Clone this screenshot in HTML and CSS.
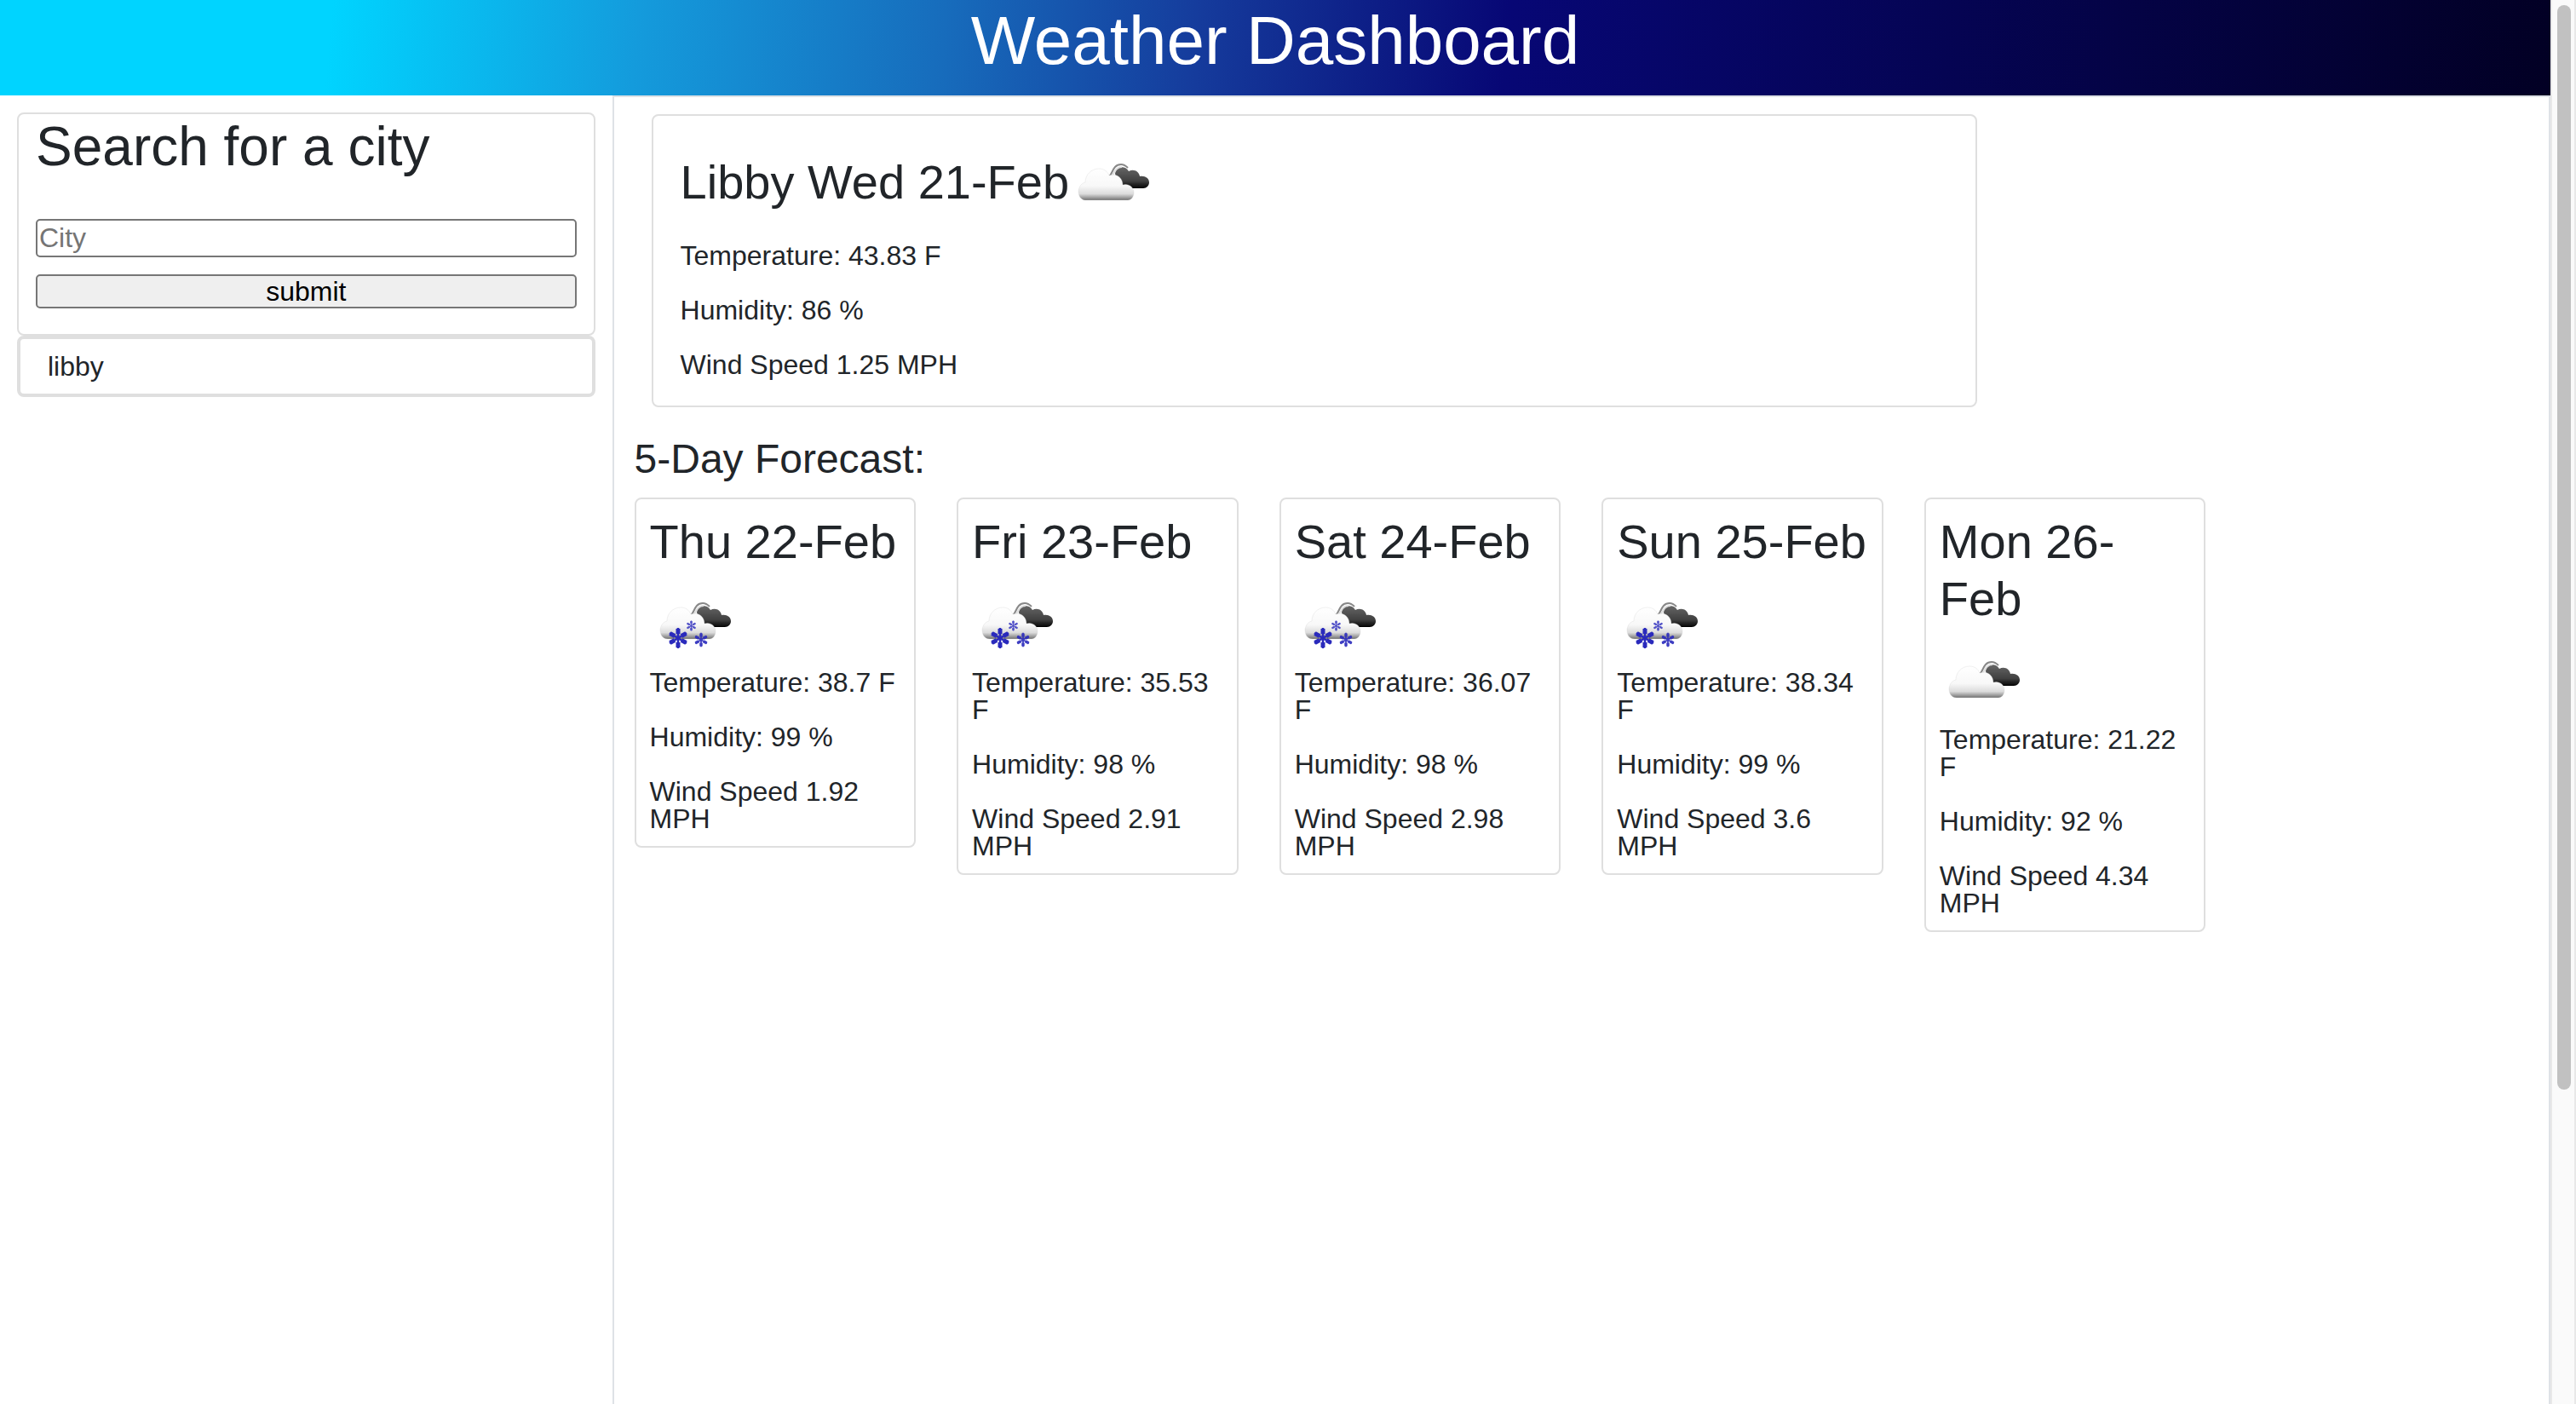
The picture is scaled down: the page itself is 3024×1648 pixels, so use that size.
FILE: index.html
```html
<!DOCTYPE html>
<html lang="en">
<head>
<meta charset="utf-8">
<title>Weather Dashboard</title>
<link rel="stylesheet" href="styles.css">
</head>
<body>
<svg class="sprite" aria-hidden="true">
  <defs>
    <linearGradient id="light" x1="0" y1="0" x2="0" y2="1">
      <stop offset="0" stop-color="#ffffff"/>
      <stop offset="0.55" stop-color="#f8f8f8"/>
      <stop offset="0.8" stop-color="#dcdcdc"/>
      <stop offset="0.9" stop-color="#a8a8a8"/>
      <stop offset="1" stop-color="#707070"/>
    </linearGradient>
    <linearGradient id="dark" x1="0" y1="0" x2="0" y2="1">
      <stop offset="0" stop-color="#666666"/>
      <stop offset="0.65" stop-color="#404040"/>
      <stop offset="1" stop-color="#000000"/>
    </linearGradient>
    <filter id="soft" x="-10%" y="-10%" width="120%" height="120%"><feGaussianBlur stdDeviation="0.7"/></filter>
    <symbol id="clouds" viewBox="1 0 100 100">
      <g filter="url(#soft)">
        <path d="M55 36C56 28 66 25 71 33C77 30 83 33 84 39C90 38 95 41 95 46C95 50 92 53 88 53H66L58 44Z" fill="url(#dark)"/>
        <path d="M48 39C52 37 52 25 62 25C66 25 68 27 70 29" fill="none" stroke="#888" stroke-width="2"/>
        <path d="M51 39C54 36 55 28 63 28" fill="none" stroke="#ddd" stroke-width="2"/>
        <path d="M21 67C14 67 12 61 12 56C13 50 16 47 20 46C20 37 27 30 36 30C42 30 46 33 48 38C56 35 64 40 64 49C70 47 77 51 77 58C77 63 74 67 70 67Z" fill="url(#light)" stroke="#ccc" stroke-opacity="0.3" stroke-width="1"/>
      </g>
    </symbol>
    <symbol id="flake" viewBox="-13 -13 26 26">
      <g fill="none" stroke="#2a2abc">
        <path d="M0-12V12M-10-6L10 6M-10 6L10-6" stroke-width="2.6"/>
        <path d="M0-11V-5M0 11V5M-9.5-5.5L-4-2.5M9.5 5.5L4 2.5M-9.5 5.5L-4 2.5M9.5-5.5L4-2.5" stroke-width="5"/>
      </g>
    </symbol>
    <symbol id="snow" viewBox="0 0 100 100">
      <use href="#clouds" x="1" y="-2" width="100" height="100"/>
      <g filter="url(#soft)">
        <use href="#flake" x="20" y="51" width="26" height="26"/>
        <use href="#flake" x="42" y="43" width="13" height="13" opacity="0.8"/>
        <use href="#flake" x="51" y="57" width="18" height="18" opacity="0.9"/>
      </g>
    </symbol>
  </defs>
</svg>
<div class="page">
  <div class="content">
    <header class="header"><h1>Weather Dashboard</h1></header>
    <div class="columns">
      <aside class="sidebar">
        <form class="card search">
          <h2><label for="city">Search for a city</label></h2>
          <input id="city" type="text" placeholder="City">
          <button type="button">submit</button>
        </form>
        <ul class="history"><li>libby</li></ul>
      </aside>
      <main class="main">
        <section class="card current">
          <h3>Libby Wed 21-Feb<svg class="icon"><use href="#clouds"/></svg></h3>
          <p>Temperature: 43.83 F</p>
          <p>Humidity: 86 %</p>
          <p>Wind Speed 1.25 MPH</p>
        </section>
        <h4>5-Day Forecast:</h4>
        <div class="forecast">
          <article class="card day">
            <h3>Thu 22-Feb</h3>
            <svg class="icon"><use href="#snow"/></svg>
            <p>Temperature: 38.7 F</p>
            <p>Humidity: 99 %</p>
            <p>Wind Speed 1.92 MPH</p>
          </article>
          <article class="card day">
            <h3>Fri 23-Feb</h3>
            <svg class="icon"><use href="#snow"/></svg>
            <p>Temperature: 35.53 F</p>
            <p>Humidity: 98 %</p>
            <p>Wind Speed 2.91 MPH</p>
          </article>
          <article class="card day">
            <h3>Sat 24-Feb</h3>
            <svg class="icon"><use href="#snow"/></svg>
            <p>Temperature: 36.07 F</p>
            <p>Humidity: 98 %</p>
            <p>Wind Speed 2.98 MPH</p>
          </article>
          <article class="card day">
            <h3>Sun 25-Feb</h3>
            <svg class="icon"><use href="#snow"/></svg>
            <p>Temperature: 38.34 F</p>
            <p>Humidity: 99 %</p>
            <p>Wind Speed 3.6 MPH</p>
          </article>
          <article class="card day">
            <h3>Mon 26-Feb</h3>
            <svg class="icon"><use href="#clouds"/></svg>
            <p>Temperature: 21.22 F</p>
            <p>Humidity: 92 %</p>
            <p>Wind Speed 4.34 MPH</p>
          </article>
        </div>
      </main>
    </div>
  </div>
  <div class="scrollbar" aria-hidden="true"><div class="thumb"></div></div>
</div>
</body>
</html>
```
FILE: styles.css
```css
* { box-sizing: border-box; }
body {
  margin: 0;
  background: #fff;
  color: #212529;
  font: 32px/32px "Liberation Sans", Arial, sans-serif;
}
h1, h2, h3, h4, p, ul { margin: 0; padding: 0; font-weight: 400; }
.sprite { position: absolute; width: 0; height: 0; }
.page { display: flex; min-height: 100vh; }
.content { flex: 1; display: flex; flex-direction: column; min-width: 0; }
.header {
  padding-bottom: 16px;
  background: linear-gradient(275deg, #020024 0%, #070775 41%, #153b9c 53%, #176cbc 63%, #149bdc 75%, #00d4ff 87%);
  color: #fff;
  text-align: center;
}
h1 { font-size: 80px; line-height: 96px; }
.columns { flex: 1; display: flex; }
.sidebar { width: 24%; padding: 20px; }
.main { flex: 1; min-width: 0; padding: 0 24px; border: 2px solid #dee2e6; border-bottom: 0; }
.card { border: 2px solid #dfdfdf; border-radius: 8px; background: #fff; }
.search { display: flex; flex-direction: column; gap: 20px; padding: 0 20px 30px; }
.search h2 { margin-bottom: 26px; font-size: 64px; line-height: 77px; }
.search input, .search button {
  width: 100%;
  margin: 0;
  border: 2px solid #767676;
  border-radius: 5px;
  font: inherit;
}
.search input { height: 45px; padding: 2px; background: #fff; }
.search input::placeholder { color: #757575; opacity: 1; }
.search button { height: 40px; padding: 0; background: #efefef; color: #000; }
.history { list-style: none; border: 4px solid #dfdfdf; border-radius: 8px; }
.history li { padding: 16px 32px; }
h3 { margin-bottom: 16px; font-size: 56px; line-height: 67px; }
h4 { margin: 32px 0 16px; font-size: 48px; line-height: 58px; }
.icon { display: block; width: 100px; height: 100px; }
p + p { margin-top: 32px; }
.current { width: 70%; margin: 20px 20px 0; padding: 32px; }
.current .icon { display: inline-block; vertical-align: middle; }
.forecast { display: grid; grid-template-columns: repeat(6, 1fr); gap: 48px; align-items: start; }
.day { padding: 16px; }
.scrollbar { width: 30px; padding: 6px; border: solid #e8e8e8; border-width: 0 2px; background: #fafafa; }
.thumb { width: 16px; height: calc(78vh - 12px); border-radius: 8px; background: #c1c1c1; }
```
